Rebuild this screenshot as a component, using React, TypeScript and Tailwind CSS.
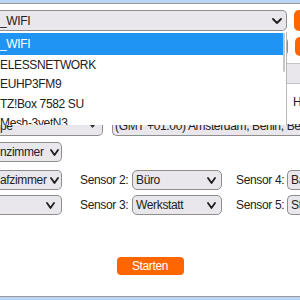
import React from 'react'

const Chevron = ({ w = 9, h = 5 }: { w?: number; h?: number }) => (
	<svg width={w} height={h + 2} viewBox={`0 0 ${w} ${h + 2}`} fill="none">
		<polyline
			points={`1,1 ${w / 2},${h + 1} ${w - 1},1`}
			stroke="#1f1f1f"
			strokeWidth="1.8"
			strokeLinecap="round"
			strokeLinejoin="round"
		/>
	</svg>
)

// Auswahlfelder, die links aus dem Bild laufen
function Field({ text, className = '' }: { text?: string; className?: string }) {
	return (
		<div
			className={`flex h-[20px] items-center justify-between rounded-r-[5px] border border-l-0 border-[#8e8e8e] bg-[#e9e7eb] pr-[2px] ${className}`}
		>
			<span className="whitespace-nowrap">{text}</span>
			<Chevron />
		</div>
	)
}

function SensorField({ text }: { text: string }) {
	return (
		<div className="flex h-[20px] w-[90px] shrink-0 items-center justify-between rounded-[5px] border border-[#8e8e8e] bg-[#e9e7eb] pl-[3px] pr-[5px]">
			<span className="whitespace-nowrap">{text}</span>
			<Chevron />
		</div>
	)
}

const networks = ['ELESSNETWORK', 'EUHP3FM9', 'TZ!Box 7582 SU', 'Mesh-3vetN3']

export default function App() {
	return (
		<div className="relative flex h-[300px] w-[300px] flex-col overflow-hidden bg-white font-['Liberation_Sans',Arial,sans-serif] text-[12px] tracking-[-0.35px] text-[#222]">
			<div className="h-[4px] shrink-0 border-b border-[#9a9a9a] bg-[#bcd5f6]" />

			{/* WLAN */}
			<div className="mt-[6px] flex h-[21px] shrink-0 items-center">
				<div className="flex h-[21px] w-[287px] shrink-0 items-center justify-between rounded-r-[5px] border border-l-0 border-[#8e8e8e] bg-[#e9e7eb] pr-[4px]">
					<span>_WIFI</span>
					<Chevron w={10} h={4} />
				</div>
				<div className="ml-[7px] h-[21px] w-[20px] shrink-0 rounded-[5px] bg-[#ff6600]" />
			</div>
			<div className="mt-[6px] flex h-[19px] shrink-0 items-center">
				<div className="h-[19px] w-[288px] shrink-0 rounded-r-[5px] border border-l-0 border-[#8e8e8e] bg-[#e9e7eb]" />
				<div className="ml-[7px] h-[19px] w-[20px] shrink-0 rounded-[5px] bg-[#ff6600]" />
			</div>
			<div className="mt-[7px] h-[21px] shrink-0 border-y border-[#c4c4c4] bg-[#e9e7eb]" />
			<div className="h-[40px] shrink-0 whitespace-nowrap pl-[293px] pt-[9px]">H</div>

			{/* Zeitzone, oben abgeschnitten */}
			<div className="h-[12px] shrink-0 overflow-hidden">
				<div className="-mt-[9px] flex items-center">
					<div className="flex h-[21px] w-[103px] shrink-0 items-center justify-between rounded-r-[5px] border border-l-0 border-[#8e8e8e] bg-[#e9e7eb] pr-[6px]">
						<span>pe</span>
						<svg width="7" height="4" viewBox="0 0 7 4">
							<polygon points="0,0 7,0 3.5,4" fill="#333" />
						</svg>
					</div>
					<div className="ml-[9px] flex h-[21px] w-[250px] shrink-0 items-center rounded-l-[5px] border border-r-0 border-[#8e8e8e] bg-[#e9e7eb] pl-[2px]">
						<span className="whitespace-nowrap">(GMT +01:00) Amsterdam, Berlin, Bern</span>
					</div>
				</div>
			</div>

			{/* Sensoren */}
			<div className="mt-[6px] flex h-[20px] shrink-0 items-center">
				<Field text="nzimmer" className="w-[62px] shrink-0" />
			</div>
			<div className="mt-[8px] flex h-[20px] shrink-0 items-center whitespace-nowrap">
				<Field text="afzimmer" className="w-[62px] shrink-0" />
				<span className="ml-[18px] w-[52px] shrink-0">Sensor 2:</span>
				<SensorField text="Büro" />
				<span className="ml-[14px] w-[51px] shrink-0">Sensor 4:</span>
				<div className="flex h-[20px] w-[40px] shrink-0 items-center rounded-l-[5px] border border-r-0 border-[#8e8e8e] bg-[#e9e7eb] pl-[3px]">
					Bad
				</div>
			</div>
			<div className="mt-[5px] flex h-[20px] shrink-0 items-center whitespace-nowrap">
				<Field className="w-[62px] shrink-0 pr-[6px]" />
				<span className="ml-[18px] w-[52px] shrink-0">Sensor 3:</span>
				<SensorField text="Werkstatt" />
				<span className="ml-[14px] w-[51px] shrink-0">Sensor 5:</span>
				<div className="flex h-[20px] w-[40px] shrink-0 items-center rounded-l-[5px] border border-r-0 border-[#8e8e8e] bg-[#e9e7eb] pl-[3px]">
					Stall
				</div>
			</div>

			<button className="mx-auto mt-[42px] flex h-[18px] w-[67px] shrink-0 items-center justify-center rounded-[4px] bg-[#ff6600] text-[12px] text-white">
				Starten
			</button>

			<div className="mt-auto h-[4px] shrink-0 border-t border-[#9a9a9a] bg-[#bcd5f6]" />

			{/* geöffnete Liste */}
			<div className="absolute left-0 top-[32px] h-[93px] w-[287px] overflow-hidden border-r border-[#b8b8b8] bg-white">
				<div className="mt-[1px] flex h-[22px] w-[283px] items-center bg-[#2094f3] text-white">_WIFI</div>
				{networks.map((n) => (
					<div key={n} className="flex h-[19.5px] items-center whitespace-nowrap">
						{n}
					</div>
				))}
				<div className="absolute right-[1px] top-[1px] h-[39px] w-[2px] rounded-full bg-[#c6c6c6]" />
			</div>
		</div>
	)
}
